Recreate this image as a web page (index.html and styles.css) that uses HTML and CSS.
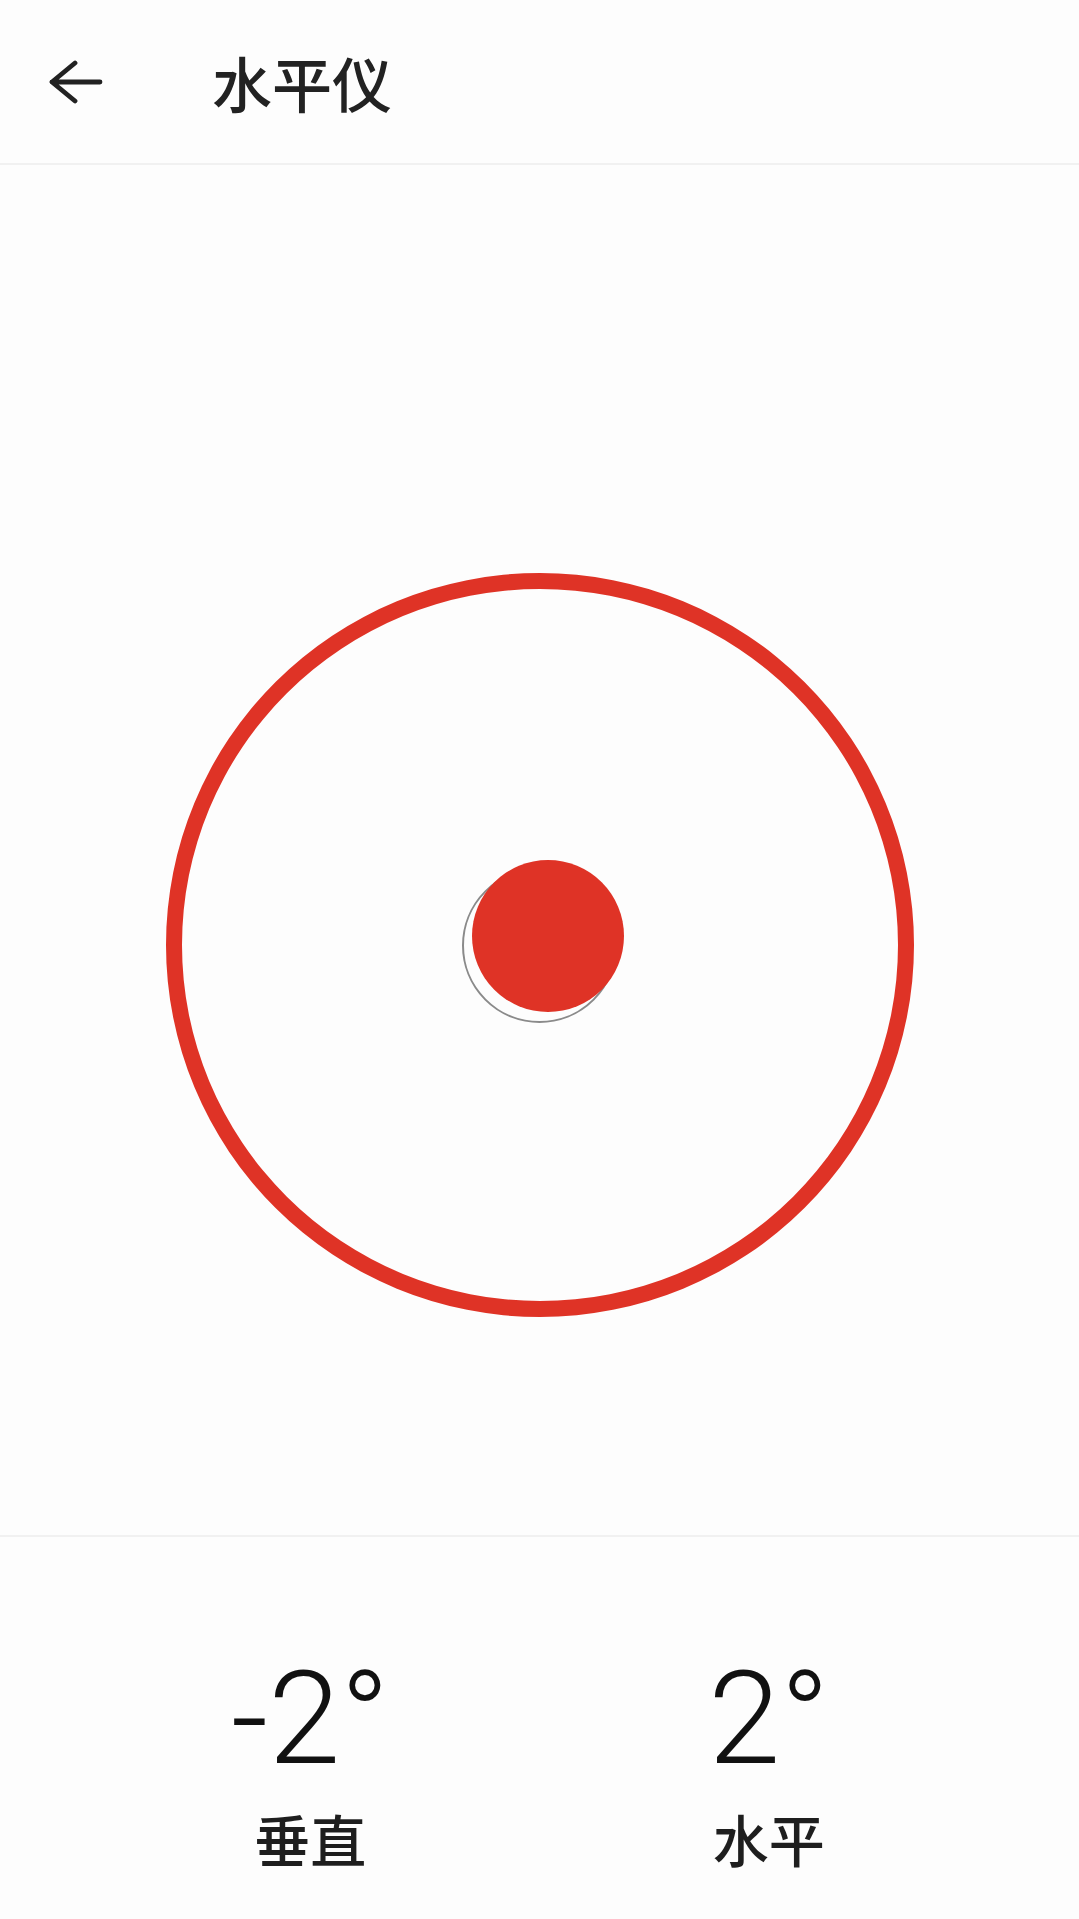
FILE: index.html
```html
<!DOCTYPE html>
<html lang="zh-CN">
<head>
<meta charset="utf-8">
<title>水平仪</title>
<link rel="stylesheet" href="styles.css">
</head>
<body>
<div class="app">
  <header class="topbar">
    <svg class="back" width="54" height="44" viewBox="0 0 54 44" aria-hidden="true">
      <path d="M26 3 L3 22 L26 41 M3 22 H51" fill="none" stroke="#222" stroke-width="4.8" stroke-linecap="round" stroke-linejoin="round"/>
    </svg>
    <h1 class="title">水平仪</h1>
  </header>
  <main class="stage">
    <div class="ring">
      <div class="target"></div>
      <div class="bubble" style="transform: translate(8px, -9px);"></div>
    </div>
  </main>
  <footer class="readout">
    <div class="cell">
      <div class="value">-2°</div>
      <div class="label">垂直</div>
    </div>
    <div class="cell">
      <div class="value">2°</div>
      <div class="label">水平</div>
    </div>
  </footer>
</div>
</body>
</html>
```
FILE: styles.css
```css
html, body {
  margin: 0;
  padding: 0;
  background: #fdfdfd;
}
.app {
  width: 1079px;
  height: 1919px;
  display: flex;
  flex-direction: column;
  font-family: "Noto Sans CJK SC", "Noto Sans", sans-serif;
  color: #1e1e1e;
  overflow: hidden;
}
.topbar {
  height: 163px;
  flex: 0 0 auto;
  display: flex;
  align-items: center;
  border-bottom: 2px solid #f1f1f1;
  box-sizing: content-box;
}
.back {
  margin-left: 49px;
  flex: 0 0 auto;
}
.title {
  margin: 0 0 0 109px;
  font-size: 60px;
  font-weight: 500;
  line-height: 1;
  color: #222;
}
.stage {
  flex: 0 0 auto;
  height: 1372px;
  border-bottom: 2px solid #f1f1f1;
  display: flex;
  justify-content: center;
  align-items: flex-start;
  box-sizing: border-box;
}
.ring {
  margin-top: 408px;
  width: 748px;
  height: 744px;
  border: 16px solid #df3326;
  border-radius: 50%;
  box-sizing: border-box;
  position: relative;
  display: flex;
  align-items: center;
  justify-content: center;
}
.target {
  width: 155px;
  height: 155px;
  border-radius: 50%;
  border: 2.5px solid #8a8a8a;
  box-sizing: border-box;
}
.bubble {
  position: absolute;
  left: calc(50% - 76px);
  top: calc(50% - 76px);
  width: 152px;
  height: 152px;
  border-radius: 50%;
  background: #df3326;
}
.readout {
  flex: 1 1 auto;
  display: grid;
  grid-template-columns: 1fr 1fr;
  padding: 107px 81px 0;
  align-items: start;
}
.cell {
  display: flex;
  flex-direction: column;
  align-items: center;
}
.value {
  font-family: Roboto, "Noto Sans", sans-serif;
  font-weight: 300;
  font-size: 130px;
  line-height: 150px;
  color: #111;
}
.label {
  margin-top: 3px;
  font-size: 56px;
  font-weight: 500;
  line-height: 81px;
  color: #1e1e1e;
}
```
